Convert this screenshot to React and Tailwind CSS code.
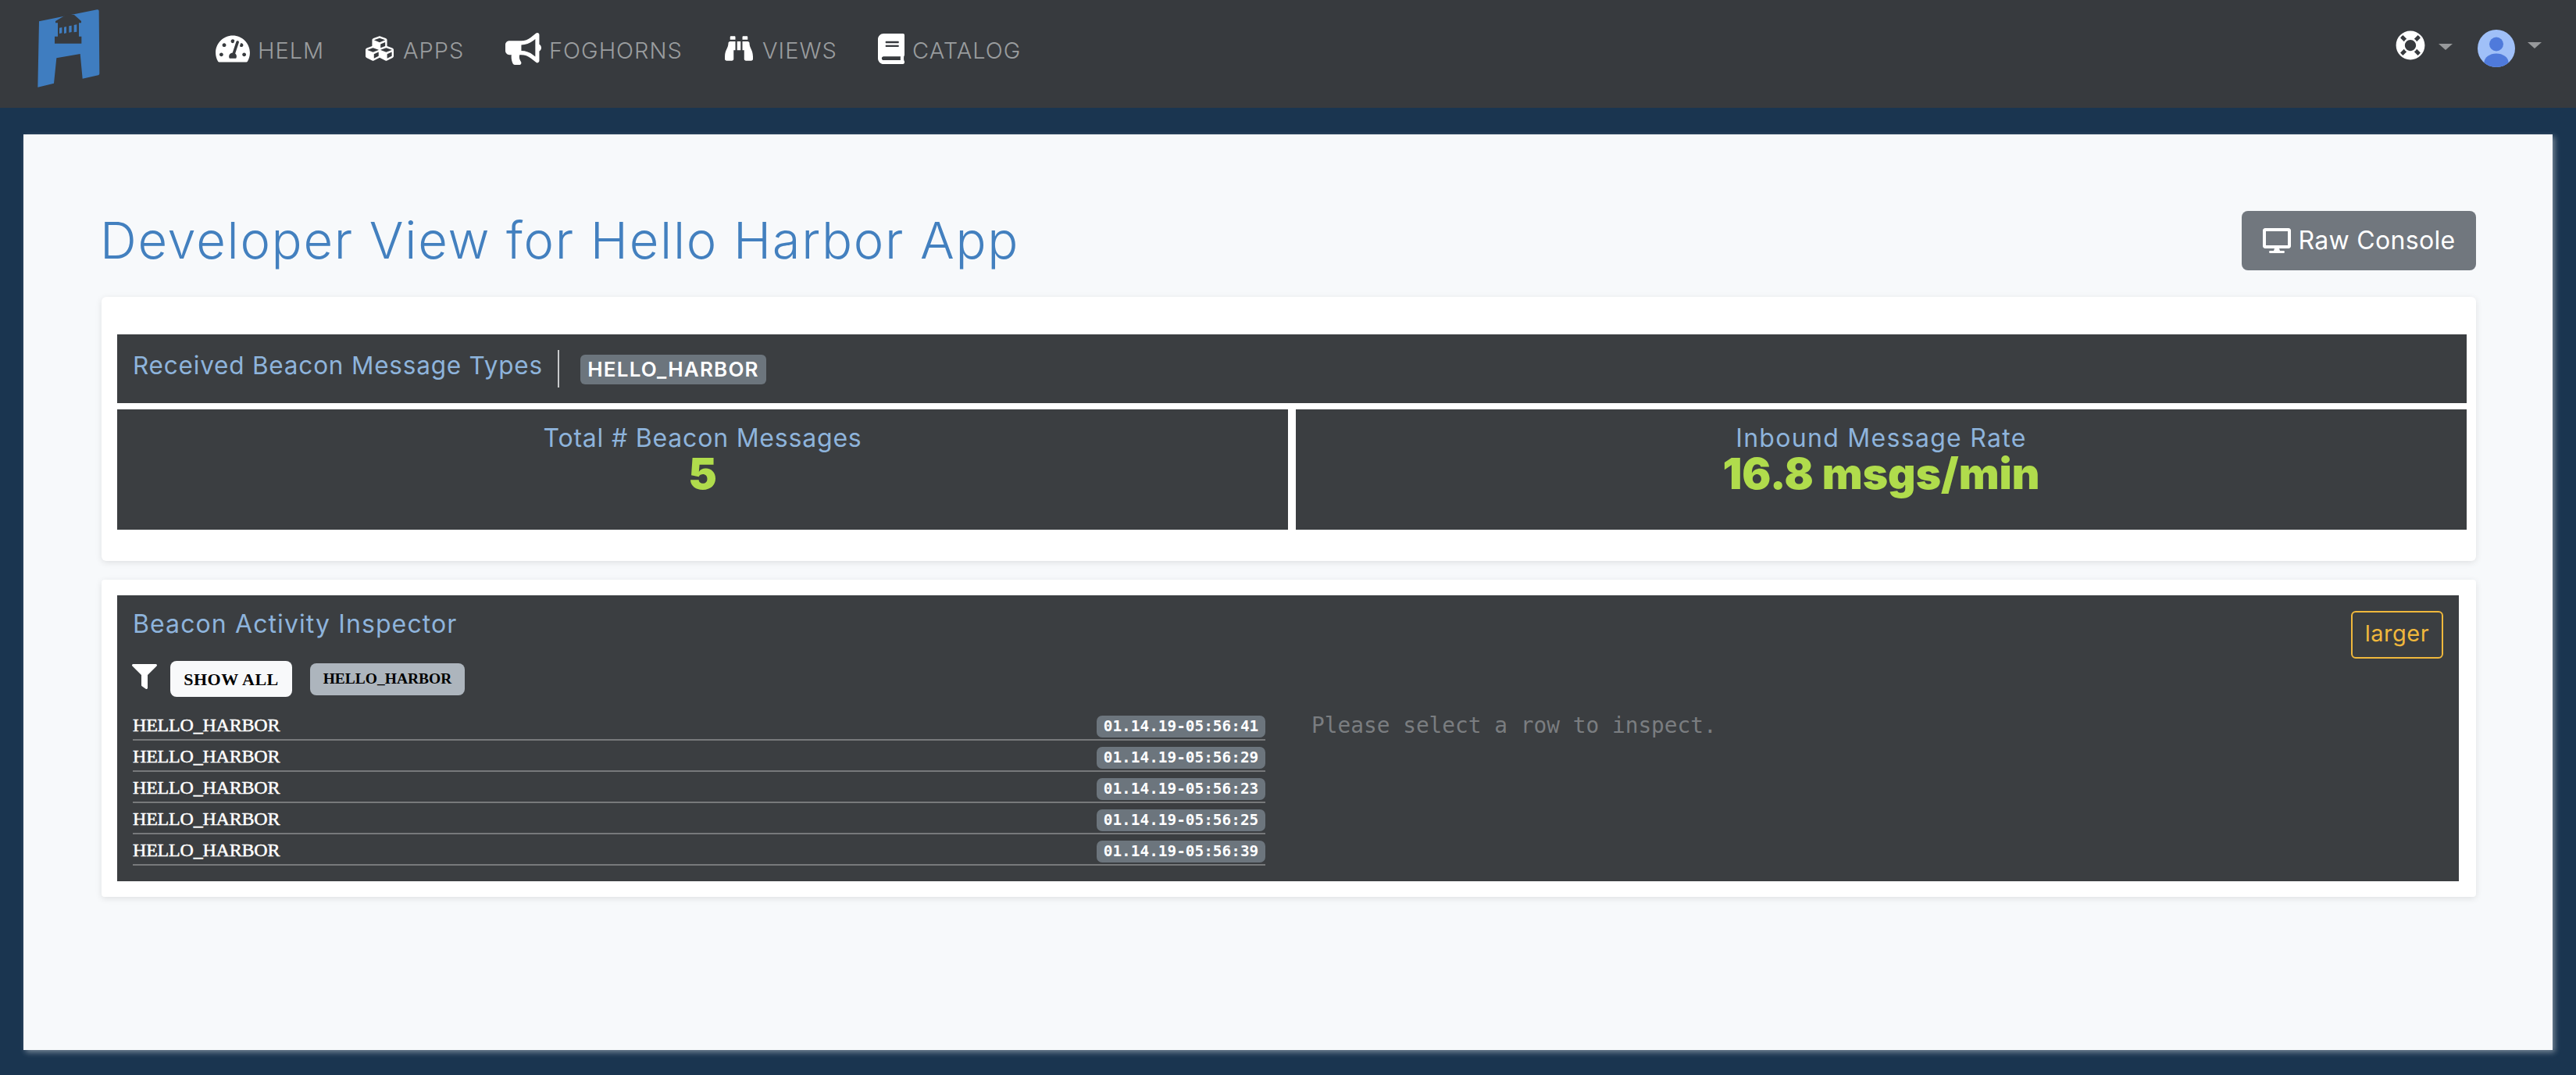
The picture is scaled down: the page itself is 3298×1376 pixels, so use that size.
import React from 'react';
import { FaTachometerAlt, FaCubes, FaBullhorn, FaBinoculars, FaBook, FaLifeRing, FaDesktop, FaFilter } from 'react-icons/fa';

const navItems = [
  { label: 'HELM', Icon: FaTachometerAlt, icon: 'w-[44px] h-[39px]', text: 'w-[84px]' },
  { label: 'APPS', Icon: FaCubes, icon: 'w-[40px] h-[36px]', text: 'w-[79px]' },
  { label: 'FOGHORNS', Icon: FaBullhorn, icon: 'w-[46px] h-[41px]', text: 'w-[171px]' },
  { label: 'VIEWS', Icon: FaBinoculars, icon: 'w-[40px] h-[36px]', text: 'w-[96px]' },
  { label: 'CATALOG', Icon: FaBook, icon: 'w-[34px] h-[39px]', text: 'w-[137px]' },
];

const rows = ['01.14.19-05:56:41', '01.14.19-05:56:29', '01.14.19-05:56:23', '01.14.19-05:56:25', '01.14.19-05:56:39'];

function Logo() {
  return (
    <svg viewBox="0 0 300 345" className="w-[100px] h-[115px] mt-[5px] ml-[40px] shrink-0">
      <path d="M30 67 L253 22 Q260 21 260 27 L262 268 Q262 273 257 274 L197 287 L188 192 L97 208 L87 305 L25 320 Z" fill="#3f7dc0" />
      <path d="M93 66 L135 41 L165 42 L192 66 L192 73 L183 73 L183 125 L193 125 L193 152 L90 152 L90 125 L102 125 L102 73 L93 73 Z" fill="#373a3e" />
      <path d="M108 92 L118 90 L118 112 L108 114 Z M126 89 L135 87 L135 112 L126 114 Z M145 85 L155 83 L155 108 L145 110 Z M164 81 L175 79 L175 107 L164 109 Z" fill="#3f7dc0" />
    </svg>
  );
}

function Caret({ className }) {
  return <div className={`w-0 h-0 border-x-[9px] border-x-transparent border-t-[8px] border-t-[#97999b] ${className}`}></div>;
}

function Avatar() {
  return (
    <svg viewBox="0 0 48 48" className="w-[48px] h-[48px] ml-[32px] mt-[38px]">
      <defs>
        <clipPath id="avatarClip"><circle cx="24" cy="24" r="24" /></clipPath>
      </defs>
      <circle cx="24" cy="24" r="24" fill="#a0c0f8" />
      <g clipPath="url(#avatarClip)" fill="#4f7adb">
        <circle cx="24" cy="18.5" r="9" />
        <ellipse cx="24" cy="42" rx="15.5" ry="11.5" />
      </g>
    </svg>
  );
}

export default function App() {
  return (
    <div className="w-[3298px] h-[1376px] bg-[#1a3550] overflow-hidden font-['Inter',sans-serif]">
      {/* Navbar */}
      <nav className="h-[138px] bg-[#373a3e] flex items-start">
        <Logo />
        <div className="flex items-center gap-[52px] ml-[136px] mt-[40px] h-[44px]">
          {navItems.map(({ label, Icon, icon, text }) => (
            <div key={label} className="flex items-center gap-[10px]">
              <Icon className={`${icon} text-white`} />
              <span className={`${text} text-[29px] leading-none font-light tracking-[1px] text-[#9a9d9f] whitespace-nowrap pt-[5px]`}>{label}</span>
            </div>
          ))}
        </div>
        <div className="ml-auto flex items-start pr-[44px]">
          <FaLifeRing className="w-[38px] h-[38px] text-white mt-[39px]" />
          <Caret className="ml-[17px] mt-[56px]" />
          <Avatar />
          <Caret className="ml-[16px] mt-[54px]" />
        </div>
      </nav>

      {/* Main panel */}
      <main className="mt-[34px] ml-[30px] w-[3238px] h-[1172px] bg-[#f7f9fb] shadow-[3px_3px_7px_rgba(255,255,255,0.4)] pl-[100px] pr-[98px] pt-[98px]">
        <div className="flex items-start justify-between h-[110px]">
          <h1 className="-ml-[2px] text-[65px] leading-[76px] font-light tracking-[1.7px] text-[#4380bf] whitespace-nowrap">Developer View for Hello Harbor App</h1>
          <button className="w-[300px] h-[76px] rounded-[8px] bg-[#71777e] text-white text-[32px] tracking-[0.3px] flex items-center justify-center gap-[10px]">
            <FaDesktop className="w-[36px] h-[32px]" />
            Raw Console
          </button>
        </div>

        {/* Counters card */}
        <section className="h-[338px] bg-white rounded-[6px] shadow-[0_2px_8px_rgba(0,0,0,0.1)] pt-[48px] pl-[20px] pr-[12px]">
          <div className="h-[88px] bg-[#3b3e41] flex items-center pl-[20px]">
            <span className="-mt-[8px] w-[524px] text-[31.5px] tracking-[0.8px] text-[#8eb4dc] whitespace-nowrap">Received Beacon Message Types</span>
            <div className="w-[2px] h-[48px] bg-[#c8cacb] ml-[20px]"></div>
            <span className="ml-[27px] mt-[1px] w-[238px] h-[38px] rounded-[6px] bg-[#6c757d] text-white text-[26px] font-semibold tracking-[1.2px] flex items-center justify-center">HELLO_HARBOR</span>
          </div>
          <div className="flex gap-[10px] mt-[8px]">
            <div className="flex-1 h-[154px] bg-[#3b3e41] text-center pt-[18px]">
              <div className="text-[32px] leading-[38px] tracking-[0.8px] text-[#8eb4dc]">Total # Beacon Messages</div>
              <div className="text-[55px] leading-[46px] mt-[3px] font-black text-[#b0dc4c]">5</div>
            </div>
            <div className="flex-1 h-[154px] bg-[#3b3e41] text-center pt-[18px]">
              <div className="text-[32px] leading-[38px] tracking-[1.3px] text-[#8eb4dc]">Inbound Message Rate</div>
              <div className="text-[55px] leading-[46px] mt-[3px] font-black text-[#b0dc4c]">16.8 msgs/min</div>
            </div>
          </div>
        </section>

        {/* Inspector card */}
        <section className="mt-[24px] h-[406px] bg-white rounded-[4px] shadow-[0_2px_8px_rgba(0,0,0,0.1)] pt-[20px] pl-[20px] pr-[22px]">
          <div className="h-[366px] bg-[#3b3e41] pl-[20px] pr-[20px] pt-[18px] relative">
            <div className="text-[32px] leading-[38px] tracking-[1.1px] text-[#8eb4dc] whitespace-nowrap">Beacon Activity Inspector</div>
            <button className="absolute right-[20px] top-[20px] w-[118px] h-[61px] border-2 border-[#f0b83c] rounded-[6px] text-[#f0b83c] text-[29px] tracking-[0.5px] pb-[3px] flex items-center justify-center">larger</button>
            <div className="flex items-center mt-[28px] h-[46px] font-['Liberation_Serif',serif] font-bold text-black">
              <FaFilter className="w-[32px] h-[32px] text-white -ml-[1px] -mt-[6px]" />
              <span className="ml-[17px] w-[156px] h-[46px] rounded-[8px] bg-[#f8f9fa] text-[22px] tracking-[0.5px] flex items-center justify-center">SHOW ALL</span>
              <span className="ml-[23px] w-[198px] h-[41px] rounded-[8px] bg-[#adb5bd] text-[19.5px] flex items-center justify-center">HELLO_HARBOR</span>
            </div>
            <div className="flex mt-[16px]">
              <div className="w-[1450px] shrink-0">
                {rows.map((time, i) => (
                  <div key={i} className="h-[40px] border-b-2 border-[#77797b] flex items-start justify-between">
                    <span className="mt-[7px] font-['Liberation_Serif',serif] text-[24px] leading-[26px] tracking-[-0.2px] [-webkit-text-stroke:0.5px_white] text-white">HELLO_HARBOR</span>
                    <span className="mt-[8px] w-[216px] h-[28px] rounded-[7px] bg-[#6c757d] text-white font-['DejaVu_Sans_Mono',monospace] font-bold text-[19.4px] flex items-center justify-center">{time}</span>
                  </div>
                ))}
              </div>
              <div className="ml-[59px] pt-[6px] font-['DejaVu_Sans_Mono',monospace] text-[27.8px] leading-[30px] text-[#7a7d80] whitespace-nowrap">Please select a row to inspect.</div>
            </div>
          </div>
        </section>
      </main>
    </div>
  );
}
